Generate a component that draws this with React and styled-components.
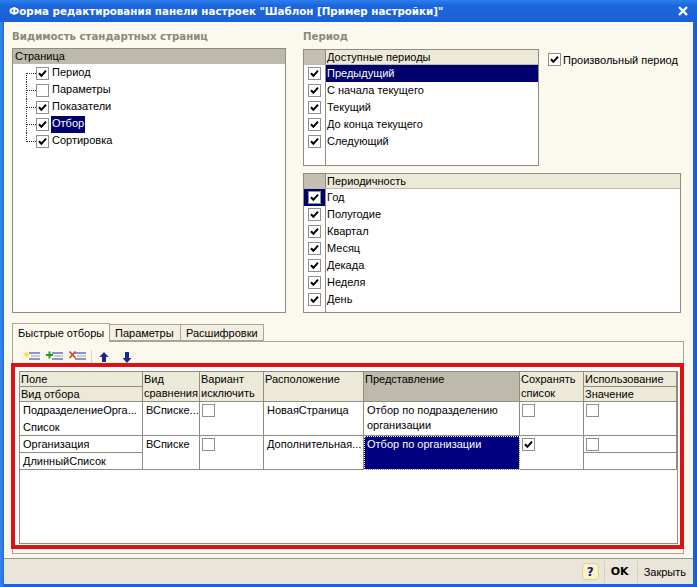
import React from 'react';
import styled, { createGlobalStyle } from 'styled-components';

const GlobalStyle = createGlobalStyle`
  html, body {
    margin: 0;
    padding: 0;
    background: #1d62d6;
  }
  * {
    box-sizing: border-box;
  }
`;

const Window = styled.div`
  width: 697px;
  height: 587px;
  display: flex;
  flex-direction: column;
  overflow: hidden;
  background: linear-gradient(90deg, #3585ee 0, #2a78e6 3px, #1d62d6 4px, #1d62d6 693px, #1a5ccc 697px);
  font-family: "Liberation Sans", Arial, sans-serif;
  font-size: 11px;
  color: #000;
`;

const TitleBar = styled.div`
  height: 22px;
  flex: none;
  display: flex;
  align-items: center;
  justify-content: space-between;
  padding: 0 8px 0 9px;
  background: linear-gradient(180deg, #2b80ee 0%, #1c66dc 25%, #1a60d6 100%);
  color: #fff;
  font-family: "DejaVu Sans", Verdana, sans-serif;
  font-weight: 700;
  font-size: 10.3px;
  white-space: nowrap;
`;

const Client = styled.div`
  flex: 1;
  min-height: 0;
  display: flex;
  flex-direction: column;
  margin: 0 4px 3px;
  background: #fbf8ee;
`;

const Main = styled.div`
  flex: 1;
  min-height: 0;
  padding: 0 0 0 8px;
`;

const Top = styled.div`
  height: 291px;
  display: flex;
  gap: 17px;
`;

const LeftColumn = styled.div`
  width: 274px;
  display: flex;
  flex-direction: column;
`;

const RightColumn = styled.div`
  width: 378px;
  display: flex;
  flex-direction: column;
`;

const GroupLabel = styled.div`
  height: ${(p) => p.$h}px;
  flex: none;
  padding-top: 8px;
  font-family: "DejaVu Sans", Verdana, sans-serif;
  font-weight: 700;
  font-size: 10.2px;
  line-height: 14px;
  color: #8b887a;
`;

const Frame = styled.div`
  border: 1px solid #8f8c80;
  background: #fff;
  display: flex;
  flex-direction: column;
`;

const Tree = styled(Frame)`
  flex: 1;
`;

const TreeHeader = styled.div`
  height: 15px;
  flex: none;
  padding-left: 2px;
  background: #bdb9ab;
  line-height: 14px;
`;

const TreeRows = styled.div`
  padding: 1px 0 0 13px;
`;

const TreeRow = styled.div`
  height: 17px;
  display: flex;
  align-items: center;
`;

const Stub = styled.span`
  position: relative;
  width: 10px;
  align-self: ${(p) => (p.$end === 'last' ? 'flex-start' : 'stretch')};
  height: ${(p) => (p.$end === 'last' ? '9px' : 'auto')};
  margin-top: ${(p) => (p.$end === 'first' ? '8px' : '0')};
  border-left: 1px dotted #333;
  &::after {
    content: '';
    position: absolute;
    left: 0;
    width: 9px;
    top: ${(p) => (p.$end === 'first' ? '0' : '8px')};
    border-top: 1px dotted #333;
  }
`;

const TreeText = styled.span`
  margin-left: 2px;
  padding: 0 1px;
  height: 17px;
  line-height: 15px;
  background: ${(p) => (p.$selected ? '#00006e' : 'transparent')};
  color: ${(p) => (p.$selected ? '#fff' : '#000')};
`;

const Box = styled.span`
  width: 13px;
  height: 13px;
  flex: none;
  display: inline-flex;
  align-items: center;
  justify-content: center;
  border: 1px solid #8f8f8c;
  background: #fff;
`;

const CheckBox = ({ checked }) => (
  <Box>
    {checked && (
      <svg width="9" height="9" viewBox="0 0 9 9">
        <path d="M1 4.2 L3.4 6.8 L8 1.6" fill="none" stroke="#000" strokeWidth="2" />
      </svg>
    )}
  </Box>
);

const PeriodRow = styled.div`
  display: flex;
  align-items: flex-start;
`;

const PeriodList = styled(Frame)`
  width: ${(p) => (p.$wide ? '100%' : '236px')};
  height: ${(p) => p.$h}px;
  margin-top: ${(p) => p.$top || 0}px;
  flex: none;
`;

const ListHeader = styled.div`
  height: 15px;
  flex: none;
  display: flex;
  line-height: 14px;
  border-bottom: 1px solid #bdb9ab;
`;

const HeaderCorner = styled.div`
  width: 21px;
  flex: none;
  background: #c3bfb1;
`;

const HeaderTitle = styled.div`
  flex: 1;
  padding-left: 1px;
  background: #ece9d8;
  border-left: 1px solid #8f8c80;
`;

const ListBody = styled.div`
  flex: 1;
  display: flex;
  flex-direction: column;
  background: linear-gradient(90deg, #fff 21px, #8f8c80 21px, #8f8c80 22px, #fff 22px);
`;

const ListRow = styled.div`
  height: 17px;
  flex: none;
  display: flex;
  align-items: center;
`;

const MarkCell = styled.div`
  width: 21px;
  height: 100%;
  flex: none;
  display: flex;
  align-items: center;
  justify-content: center;
  background: ${(p) => (p.$focused ? '#00006e' : 'transparent')};
`;

const RowText = styled.div`
  flex: 1;
  height: 100%;
  margin-left: 1px;
  padding-left: 1px;
  line-height: 16px;
  background: ${(p) => (p.$selected ? '#00006e' : 'transparent')};
  color: ${(p) => (p.$selected ? '#fff' : '#000')};
`;

const FreePeriod = styled.label`
  display: flex;
  align-items: center;
  gap: 2px;
  margin: 4px 0 0 9px;
  height: 13px;
  white-space: nowrap;
`;

const Tabs = styled.div`
  height: 18px;
  margin-top: 10px;
  display: flex;
  align-items: flex-end;
  position: relative;
  z-index: 1;
`;

const Tab = styled.div`
  height: ${(p) => (p.$active ? '19px' : '17px')};
  width: ${(p) => p.$w}px;
  padding: 0 0 0 5px;
  line-height: ${(p) => (p.$active ? '18px' : '16px')};
  background: ${(p) => (p.$active ? '#fbf8ee' : '#f3f0e2')};
  border: 1px solid #a8a598;
  border-bottom: ${(p) => (p.$active ? 'none' : '1px solid #a8a598')};
  border-left: ${(p) => (p.$active ? '1px solid #a8a598' : 'none')};
  margin-bottom: ${(p) => (p.$active ? '-1px' : '0')};
`;

const TabPanel = styled.div`
  width: 672px;
  height: 213px;
  border: 1px solid #a8a598;
`;

const Toolbar = styled.div`
  height: 21px;
  display: flex;
  align-items: flex-start;
  padding: 8px 0 0 9px;
  gap: 5px;
`;

const ToolIcon = styled.svg`
  width: 18px;
  height: 13px;
  flex: none;
`;

const ArrowIcon = styled.svg`
  width: 14px;
  height: 13px;
  flex: none;
  & + & {
    margin-left: 4px;
  }
`;

const ToolSep = styled.span`
  width: 1px;
  height: 13px;
  background: #d8d5c6;
`;

const RedBox = styled.div`
  position: relative;
  width: 673px;
  height: 186px;
  margin-left: -2px;
  padding: 4px 2px 1px 4px;
  border: 4px solid #dd1111;
  background: #fff;
  display: flex;
`;

const Table = styled.div`
  flex: 1;
  display: grid;
  grid-template-columns: 123px 57px 64px 100px 156px 64px 1fr;
  grid-template-rows: 15px 15px 17px 17px 17px 17px;
  align-content: start;
  border: 1px solid #8f8c80;
  background: #fff;
`;

const Cell = styled.div`
  grid-row: span ${(p) => p.$rows || 1};
  padding: ${(p) => (p.$head ? '0 0 0 1px' : '1px 0 0 3px')};
  line-height: ${(p) => (p.$head ? '14px' : '15px')};
  white-space: ${(p) => (p.$wrap ? 'normal' : 'nowrap')};
  overflow: hidden;
  border-right: 1px solid #8f8c80;
  border-bottom: ${(p) => (p.$open ? 'none' : '1px solid #8f8c80')};
  background: ${(p) => {
    if (p.$active) return '#000080';
    if (p.$current) return '#bdb9ab';
    if (p.$head) return '#ece9d8';
    return '#fff';
  }};
  color: ${(p) => (p.$active ? '#fff' : '#000')};
  outline: ${(p) => (p.$active ? '1px dotted #fff' : 'none')};
  outline-offset: -1px;
`;

const BoxCell = styled(Cell)`
  padding: 2px 0 0 2px;
`;

const StatusBar = styled.div`
  height: 26px;
  flex: none;
  display: flex;
  align-items: center;
  justify-content: flex-end;
  padding-right: 7px;
  background: #e9e5d8;
  border-top: 1px solid #9a9688;
`;

const HelpButton = styled.div`
  width: 17px;
  height: 17px;
  display: flex;
  align-items: center;
  justify-content: center;
  border: 1px solid #d8cf9c;
  border-radius: 4px;
  background: #fbf3c4;
  color: #14148c;
  font-family: "DejaVu Sans", sans-serif;
  font-weight: 700;
  font-size: 12px;
`;

const BarSep = styled.span`
  width: 1px;
  height: 22px;
  background: #d5d2c2;
  margin: ${(p) => p.$m};
`;

const OkButton = styled.div`
  font-family: "DejaVu Sans", sans-serif;
  font-weight: 700;
  font-size: 11px;
`;

const periods = ['Предыдущий', 'С начала текущего', 'Текущий', 'До конца текущего', 'Следующий'];
const intervals = ['Год', 'Полугодие', 'Квартал', 'Месяц', 'Декада', 'Неделя', 'День'];
const pages = [
  { name: 'Период', checked: true },
  { name: 'Параметры', checked: false },
  { name: 'Показатели', checked: true },
  { name: 'Отбор', checked: true, selected: true },
  { name: 'Сортировка', checked: true },
];

const Lines = () => (
  <>
    <rect x="7" y="2" width="11" height="2" fill="#8a96c4" />
    <rect x="9" y="5" width="9" height="2" fill="#c4cce2" />
    <rect x="7" y="8" width="11" height="2" fill="#8a96c4" />
  </>
);

export default function App() {
  return (
    <Window>
      <GlobalStyle />
      <TitleBar>
        <span>Форма редактирования панели настроек "Шаблон [Пример настройки]"</span>
        <svg width="12" height="12" viewBox="0 0 12 12">
          <path d="M2 2 L10 10 M10 2 L2 10" stroke="#fff" strokeWidth="2.4" />
        </svg>
      </TitleBar>
      <Client>
        <Main>
          <Top>
            <LeftColumn>
              <GroupLabel $h={26}>Видимость стандартных страниц</GroupLabel>
              <Tree>
                <TreeHeader>Страница</TreeHeader>
                <TreeRows>
                  {pages.map((page, i) => (
                    <TreeRow key={page.name}>
                      <Stub $end={i === 0 ? 'first' : i === pages.length - 1 ? 'last' : undefined} />
                      <CheckBox checked={page.checked} />
                      <TreeText $selected={page.selected}>{page.name}</TreeText>
                    </TreeRow>
                  ))}
                </TreeRows>
              </Tree>
            </LeftColumn>
            <RightColumn>
              <GroupLabel $h={27}>Период</GroupLabel>
              <PeriodRow>
                <PeriodList $h={117}>
                  <ListHeader>
                    <HeaderCorner />
                    <HeaderTitle>Доступные периоды</HeaderTitle>
                  </ListHeader>
                  <ListBody>
                    {periods.map((name, i) => (
                      <ListRow key={name}>
                        <MarkCell>
                          <CheckBox checked />
                        </MarkCell>
                        <RowText $selected={i === 0}>{name}</RowText>
                      </ListRow>
                    ))}
                  </ListBody>
                </PeriodList>
                <FreePeriod>
                  <CheckBox checked />
                  Произвольный период
                </FreePeriod>
              </PeriodRow>
              <PeriodList $wide $h={140} $top={7}>
                <ListHeader>
                  <HeaderCorner />
                  <HeaderTitle>Периодичность</HeaderTitle>
                </ListHeader>
                <ListBody>
                  {intervals.map((name, i) => (
                    <ListRow key={name}>
                      <MarkCell $focused={i === 0}>
                        <CheckBox checked />
                      </MarkCell>
                      <RowText>{name}</RowText>
                    </ListRow>
                  ))}
                </ListBody>
              </PeriodList>
            </RightColumn>
          </Top>
          <Tabs>
            <Tab $active $w={98}>Быстрые отборы</Tab>
            <Tab $w={71}>Параметры</Tab>
            <Tab $w={83}>Расшифровки</Tab>
          </Tabs>
          <TabPanel>
            <Toolbar>
              <ToolIcon viewBox="0 0 18 13">
                <Lines />
                <path d="M4.5 1 L5.5 3.5 L8 4.5 L5.5 5.5 L4.5 8 L3.5 5.5 L1 4.5 L3.5 3.5 Z" fill="#f4dc30" stroke="#f8ec80" strokeWidth="1" />
              </ToolIcon>
              <ToolIcon viewBox="0 0 18 13">
                <Lines />
                <path d="M4.5 1.5 V8.5 M1 5 H8" stroke="#1c9a28" strokeWidth="2" />
              </ToolIcon>
              <ToolIcon viewBox="0 0 18 13">
                <Lines />
                <path d="M1.5 1.5 L7.5 8 M7.5 1.5 L1.5 8" stroke="#d8402a" strokeWidth="1.8" />
              </ToolIcon>
              <ToolSep />
              <ArrowIcon viewBox="0 0 14 13">
                <path d="M7 2 L11.5 7 H9 V12 H5 V7 H2.5 Z" fill="#1a2a8c" />
              </ArrowIcon>
              <ArrowIcon viewBox="0 0 14 13">
                <path d="M5 2 H9 V8 H11.5 L7 13 L2.5 8 H5 Z" fill="#1a2a8c" />
              </ArrowIcon>
            </Toolbar>
            <RedBox>
              <Table>
                <Cell $head>Поле</Cell>
                <Cell $head $rows={2} $wrap>Вид сравнения</Cell>
                <Cell $head $rows={2} $wrap>Вариант исключить</Cell>
                <Cell $head $rows={2}>Расположение</Cell>
                <Cell $head $current $rows={2}>Представление</Cell>
                <Cell $head $rows={2} $wrap>Сохранять список</Cell>
                <Cell $head>Использование</Cell>
                <Cell $head>Вид отбора</Cell>
                <Cell $head>Значение</Cell>

                <Cell $open>ПодразделениеОрга...</Cell>
                <Cell $rows={2}>ВСписке...</Cell>
                <BoxCell $rows={2}><CheckBox /></BoxCell>
                <Cell $rows={2}>НоваяСтраница</Cell>
                <Cell $rows={2} $wrap>Отбор по подразделению организации</Cell>
                <BoxCell $rows={2}><CheckBox /></BoxCell>
                <BoxCell $open><CheckBox /></BoxCell>
                <Cell>Список</Cell>
                <Cell />

                <Cell>Организация</Cell>
                <Cell $rows={2}>ВСписке</Cell>
                <BoxCell $rows={2}><CheckBox /></BoxCell>
                <Cell $rows={2}>Дополнительная...</Cell>
                <Cell $rows={2} $active>Отбор по организации</Cell>
                <BoxCell $rows={2}><CheckBox checked /></BoxCell>
                <BoxCell><CheckBox /></BoxCell>
                <Cell>ДлинныйСписок</Cell>
                <Cell />
              </Table>
            </RedBox>
          </TabPanel>
        </Main>
        <StatusBar>
          <HelpButton>?</HelpButton>
          <BarSep $m="0 6px 0 5px" />
          <OkButton>OK</OkButton>
          <BarSep $m="0 6px 0 8px" />
          <span>Закрыть</span>
        </StatusBar>
      </Client>
    </Window>
  );
}
